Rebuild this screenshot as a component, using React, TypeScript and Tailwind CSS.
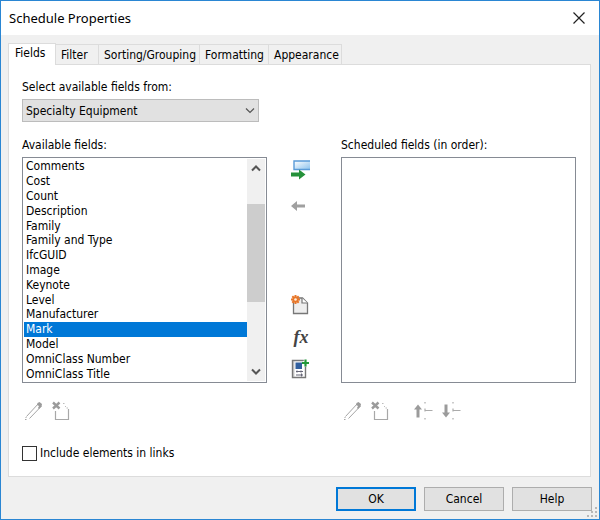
import { useState } from "react";
import type { ReactNode } from "react";
import clsx from "clsx";

const TABS = [
  { name: "Fields", width: "w-12" },
  { name: "Filter", width: "w-[43px]" },
  { name: "Sorting/Grouping", width: "w-[101px]" },
  { name: "Formatting", width: "w-[69px]" },
  { name: "Appearance", width: "w-[73px]" },
];

const AVAILABLE_FIELDS = [
  "Comments",
  "Cost",
  "Count",
  "Description",
  "Family",
  "Family and Type",
  "IfcGUID",
  "Image",
  "Keynote",
  "Level",
  "Manufacturer",
  "Mark",
  "Model",
  "OmniClass Number",
  "OmniClass Title",
];

interface IconButtonProps {
  label: string;
  disabled?: boolean;
  children: ReactNode;
}

function IconButton({ label, disabled, children }: IconButtonProps) {
  return (
    <button
      type="button"
      aria-label={label}
      title={label}
      disabled={disabled}
      className="size-5 shrink-0"
    >
      <svg viewBox="0 0 20 20" className="size-5" fill="none">
        {children}
      </svg>
    </button>
  );
}

function AddFieldIcon() {
  return (
    <>
      <defs>
        <linearGradient id="row" x1="0" y1="0" x2="1" y2="1">
          <stop offset="0" stopColor="#fff" />
          <stop offset="1" stopColor="#8fc4ee" />
        </linearGradient>
      </defs>
      <path d="M19 1H3v8h16V1Z" fill="url(#row)" />
      <path d="M19 1H3v8.5h16" stroke="#5a9bd8" strokeWidth="1.4" />
      <path d="M0 12.5h8V9.5l6.5 5L8 19.5v-3H0Z" fill="#25913a" />
    </>
  );
}

function RemoveFieldIcon() {
  return (
    <path d="M14 8.5H6V5L0 10l6 5v-3.5h8Z" fill="#a0a0a0" />
  );
}

function NewParameterIcon() {
  return (
    <>
      <path
        d="M2.5 5v13.5h14V8l-5-5H7"
        fill="#eeeeee"
        stroke="#777"
        strokeWidth="1.3"
      />
      <path d="M11 3v5h5.5" fill="#fff" stroke="#777" strokeWidth="1.2" />
      <path
        d="M4.5 0v9M0 4.5h9M1.3 1.3l6.4 6.4M7.7 1.3L1.3 7.7"
        stroke="#e8772a"
        strokeWidth="2"
      />
      <circle cx="4.5" cy="4.5" r="3" fill="#e8772a" />
      <circle cx="4.5" cy="4.5" r="1.3" fill="#fff1df" />
    </>
  );
}

function CombinedParameterIcon() {
  return (
    <>
      <path d="M1.5 1.5h13v17h-13Z" fill="#fff" stroke="#777" strokeWidth="1.4" />
      <path d="M2.8 2v16" stroke="#aaa" />
      <path d="M4.5 3.5H11V10H4.5Z" fill="#315f9e" />
      <path
        d="M5 12.5h7M6 11.5v2M10 11.5v2M5 16h7M10.5 14.5v3"
        stroke="#667"
        strokeWidth="1.1"
      />
      <path d="M14.5 0v7.5M12 4h6.5" stroke="#fff" strokeWidth="3.4" />
      <path d="M14.5 .5v7M11 4h7" stroke="#23983a" strokeWidth="2.2" />
    </>
  );
}

function EditIcon() {
  return (
    <>
      <path
        d="M3.5 15.5 15.5 2.5 M6.5 17.5 18.5 5"
        stroke="#a5a5a5"
        strokeWidth="1"
      />
      <path d="m14.5 2 2-1 2.5 2-.5 2.5-2.5 2.5-1-1 1-2-2-1Z" fill="#9b9b9b" />
      <path d="M2 18.5h1.5M3 16v1" stroke="#a5a5a5" />
    </>
  );
}

function DeleteIcon() {
  return (
    <>
      <path d="M4.5 10v8.5h13V8" stroke="#a8a8a8" strokeWidth="1.2" />
      <path
        d="M12 2.5h1.5M14 5.5h1M15.5 7h1.5"
        stroke="#bcbcbc"
        strokeWidth="1.2"
      />
      <path d="m2 1.5 6.5 6M8.5 1.5 2 7.5" stroke="#9b9b9b" strokeWidth="2.4" />
    </>
  );
}

function MoveIcon({ down = false }: { down?: boolean }) {
  return (
    <>
      <path
        d={
          down
            ? "M2.5 3.5h3v8H8l-4 5-4-5h2.5Z"
            : "M2.5 16.5h3v-8H8L4 3.5 0 8.5h2.5Z"
        }
        fill="#9b9b9b"
      />
      <path
        d="M11 1v1.5M11 7.5v3M11 17v1.5M10.5 9.5h8"
        stroke="#ababab"
        strokeWidth="1.2"
      />
    </>
  );
}

function ScrollArrow({ down = false }: { down?: boolean }) {
  return (
    <button
      type="button"
      aria-label={down ? "Scroll down" : "Scroll up"}
      className="flex h-[18px] w-full items-center justify-center"
    >
      <svg viewBox="0 0 10 8" className="h-2 w-2.5" fill="none">
        <path
          d={down ? "m1 1.5 4 4 4-4" : "m1 6.5 4-4 4 4"}
          stroke="#555"
          strokeWidth="2"
        />
      </svg>
    </button>
  );
}

function DialogButton({
  children,
  primary,
}: {
  children: ReactNode;
  primary?: boolean;
}) {
  return (
    <button
      type="button"
      className={clsx(
        "flex h-6 w-20 items-center justify-center bg-[#e1e1e1]",
        primary ? "border-2 border-[#0078d7]" : "border border-[#adadad]"
      )}
    >
      {children}
    </button>
  );
}

export default function App() {
  const [tab, setTab] = useState("Fields");
  const [selected, setSelected] = useState("Mark");

  return (
    <div className="relative flex min-h-screen flex-col border border-[#2a86d3] bg-[#f0f0f0] font-['DejaVu_Sans_Condensed','Noto_Sans',sans-serif] text-[12px] leading-4 text-black">
      <header className="flex h-[34px] items-center justify-between bg-white pr-2.5 pl-2">
        <h1 className="font-['Noto_Sans','Open_Sans',sans-serif] text-[13px] leading-5">
          Schedule Properties
        </h1>
        <button type="button" aria-label="Close" className="p-1">
          <svg viewBox="0 0 12 12" className="size-3" fill="none">
            <path d="m.5.5 11 11M11.5.5l-11 11" stroke="#222" strokeWidth="1.2" />
          </svg>
        </button>
      </header>

      <main className="mr-2 ml-[7px] flex grow flex-col pt-2">
        <div role="tablist" className="flex items-end">
          {TABS.map(({ name, width }) => (
            <button
              key={name}
              type="button"
              role="tab"
              aria-selected={tab === name}
              onClick={() => setTab(name)}
              className={clsx(
                "flex shrink-0 items-center whitespace-nowrap border-t border-r border-[#dcdcdc]",
                width,
                tab === name
                  ? "z-10 -mb-px h-[22px] border-l bg-white pb-1 pl-1.5"
                  : "h-5 pl-[5px]"
              )}
            >
              {name}
            </button>
          ))}
        </div>

        <section
          role="tabpanel"
          aria-label="Fields"
          className="flex grow flex-col border border-[#dcdcdc] bg-white pt-3.5 pr-3.5 pl-[13px]"
        >
          <label htmlFor="category">Select available fields from:</label>
          <div className="relative mt-1 w-[237px]">
            <select
              id="category"
              defaultValue="Specialty Equipment"
              className="block h-[23px] w-full appearance-none border border-[#bcbcbc] bg-[#e1e1e1] pl-[3px]"
            >
              <option>Specialty Equipment</option>
            </select>
            <svg
              viewBox="0 0 10 6"
              className="pointer-events-none absolute top-[9px] right-1 h-1.5 w-2.5"
              fill="none"
            >
              <path d="m1 .5 4 4 4-4" stroke="#555" strokeWidth="1.2" />
            </svg>
          </div>

          <div className="mt-[15px] grid grid-cols-[245fr_74px_235fr] gap-y-1">
            <h2 id="available">Available fields:</h2>
            <span />
            <h2 id="scheduled">Scheduled fields (in order):</h2>

            <div className="flex h-[226px] border border-[#868b94] p-px">
              <ul
                role="listbox"
                aria-labelledby="available"
                className="flex grow flex-col"
              >
                {AVAILABLE_FIELDS.map((field) => (
                  <li
                    key={field}
                    role="option"
                    aria-selected={selected === field}
                    onClick={() => setSelected(field)}
                    className={clsx(
                      "flex flex-1 items-center pl-0.5 leading-[14px]",
                      selected === field && "bg-[#0078d7] text-white"
                    )}
                  >
                    {field}
                  </li>
                ))}
              </ul>
              <div className="flex w-[18px] flex-col bg-[#f0f0f0]">
                <ScrollArrow />
                <div className="grow pt-[27px]">
                  <div className="h-[98px] bg-[#cdcdcd]" />
                </div>
                <ScrollArrow down />
              </div>
            </div>

            <div className="flex flex-col justify-between pt-[3px] pb-1 pl-6">
              <div className="flex flex-col gap-4">
                <IconButton label="Add field">
                  <AddFieldIcon />
                </IconButton>
                <IconButton label="Remove field" disabled>
                  <RemoveFieldIcon />
                </IconButton>
              </div>
              <div className="flex flex-col gap-3">
                <IconButton label="New parameter">
                  <NewParameterIcon />
                </IconButton>
                <button
                  type="button"
                  aria-label="Calculated value"
                  className="size-5 text-center font-['Liberation_Serif',serif] text-[18px] leading-4 font-bold text-[#444] italic"
                >
                  fx
                </button>
                <IconButton label="Combine parameters">
                  <CombinedParameterIcon />
                </IconButton>
              </div>
            </div>

            <ul
              role="listbox"
              aria-labelledby="scheduled"
              className="border border-[#868b94]"
            />
          </div>

          <div className="mt-[18px] grid grid-cols-[245fr_74px_235fr]">
            <div className="flex gap-2 pl-px">
              <IconButton label="Edit parameter" disabled>
                <EditIcon />
              </IconButton>
              <IconButton label="Delete parameter" disabled>
                <DeleteIcon />
              </IconButton>
            </div>
            <span />
            <div className="flex gap-2 pl-px">
              <IconButton label="Edit scheduled field" disabled>
                <EditIcon />
              </IconButton>
              <IconButton label="Delete scheduled field" disabled>
                <DeleteIcon />
              </IconButton>
              <div className="ml-4 flex gap-2">
                <IconButton label="Move up" disabled>
                  <MoveIcon />
                </IconButton>
                <IconButton label="Move down" disabled>
                  <MoveIcon down />
                </IconButton>
              </div>
            </div>
          </div>

          <label className="mt-6 flex items-center gap-[3px]">
            <input
              type="checkbox"
              className="size-[15px] appearance-none border border-[#333] bg-white checked:bg-[#0078d7]"
            />
            Include elements in links
          </label>
        </section>
      </main>

      <footer className="flex justify-end gap-2 pt-[10px] pr-[7px] pb-2">
        <DialogButton primary>OK</DialogButton>
        <DialogButton>Cancel</DialogButton>
        <DialogButton>Help</DialogButton>
      </footer>

      <svg
        viewBox="0 0 10 10"
        className="pointer-events-none absolute right-0.5 bottom-0.5 size-2.5"
        fill="#b8b8b8"
      >
        <path d="M8 0h2v2H8ZM4 4h2v2H4ZM8 4h2v2H8ZM0 8h2v2H0ZM4 8h2v2H4ZM8 8h2v2H8Z" />
      </svg>
    </div>
  );
}
